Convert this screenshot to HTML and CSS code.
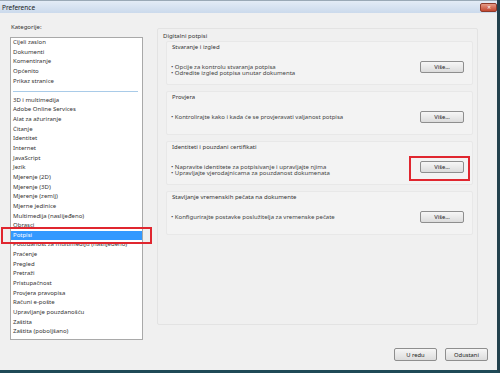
FILE: index.html
```html
<!DOCTYPE html>
<html>
<head>
    <title>Preference</title>
    <link rel="stylesheet" href="styles.css">
</head>
<body>
<div class="window">
    <div class="titlebar">
        <span class="title">Preference</span>
        <span class="close">&#x2715;</span>
    </div>

    <div class="main">
        <!-- category list on the left -->
        <div class="categories">
            <div class="label">Kategorije:</div>
            <ul class="list">
                <li>Cijeli zaslon</li>
                <li>Dokumenti</li>
                <li>Komentiranje</li>
                <li>Općenito</li>
                <li>Prikaz stranice</li>
                <li class="separator"></li>
                <li>3D i multimedija</li>
                <li>Adobe Online Services</li>
                <li>Alat za ažuriranje</li>
                <li>Čitanje</li>
                <li>Identitet</li>
                <li>Internet</li>
                <li>JavaScript</li>
                <li>Jezik</li>
                <li>Mjerenje (2D)</li>
                <li>Mjerenje (3D)</li>
                <li>Mjerenje (zemlj)</li>
                <li>Mjerne jedinice</li>
                <li>Multimedija (naslijeđeno)</li>
                <li>Obrasci</li>
                <li class="selected marked">Potpisi</li>
                <li>Pouzdanost za multimediju (naslijeđeno)</li>
                <li>Praćenje</li>
                <li>Pregled</li>
                <li>Pretraži</li>
                <li>Pristupačnost</li>
                <li>Provjera pravopisa</li>
                <li>Računi e-pošte</li>
                <li>Upravljanje pouzdanošću</li>
                <li>Zaštita</li>
                <li>Zaštita (poboljšano)</li>
            </ul>
        </div>

        <!-- settings for the selected category -->
        <div class="group">
            <div class="group-title">Digitalni potpisi</div>

            <div class="section">
                <div class="section-title">Stvaranje i izgled</div>
                <div class="section-body">
                    <ul class="bullets">
                        <li>• Opcije za kontrolu stvaranja potpisa</li>
                        <li>• Odredite izgled potpisa unutar dokumenta</li>
                    </ul>
                    <button class="btn">Više...</button>
                </div>
            </div>

            <div class="section">
                <div class="section-title">Provjera</div>
                <div class="section-body">
                    <ul class="bullets">
                        <li>• Kontrolirajte kako i kada će se provjeravati valjanost potpisa</li>
                    </ul>
                    <button class="btn">Više...</button>
                </div>
            </div>

            <div class="section">
                <div class="section-title">Identiteti i pouzdani certifikati</div>
                <div class="section-body">
                    <ul class="bullets">
                        <li>• Napravite identitete za potpisivanje i upravljajte njima</li>
                        <li>• Upravljajte vjerodajnicama za pouzdanost dokumenata</li>
                    </ul>
                    <span class="btn-wrap marked-btn"><button class="btn">Više...</button></span>
                </div>
            </div>

            <div class="section">
                <div class="section-title">Stavljanje vremenskih pečata na dokumente</div>
                <div class="section-body">
                    <ul class="bullets">
                        <li>• Konfigurirajte postavke poslužitelja za vremenske pečate</li>
                    </ul>
                    <button class="btn">Više...</button>
                </div>
            </div>
        </div>
    </div>

    <div class="footer">
        <button class="btn">U redu</button>
        <button class="btn">Odustani</button>
    </div>
</div>
</body>
</html>
```

FILE: styles.css
```css
body {
    margin: 0;
    font-family: "Noto Sans", "Open Sans", sans-serif;
    color: #333;
}

.window {
    width: 500px;
    height: 373px;
    box-sizing: border-box;
    background-color: #f0f0f0;
    border-right: 3px solid #22414d;
    border-bottom: 3px solid #1f4a57;
    display: flex;
    flex-direction: column;
}

/* Title bar */
.titlebar {
    height: 13px;
    box-sizing: border-box;
    border-top: 1px solid #9aa9b6;
    background: linear-gradient(#e3ecf6, #cbdaec);
    display: flex;
    align-items: center;
    justify-content: space-between;
    padding-left: 2px;
}

.title {
    font-size: 6.5px;
    color: #1b1b1b;
}

.close {
    width: 17px;
    height: 9px;
    margin-top: 1px;
    border-radius: 2px;
    background: linear-gradient(#e59a85, #c4472f);
    border: 1px solid #8e3a2a;
    box-sizing: border-box;
    color: #fff;
    font-size: 5px;
    line-height: 7px;
    text-align: center;
}

/* Main area */
.main {
    display: flex;
    padding: 10px 0 0 10px;
}

.categories {
    width: 133px;
}

.label {
    font-size: 6px;
    line-height: 8px;
    padding-left: 1px;
}

.list {
    list-style: none;
    margin: 6px 0 0 0;
    padding: 0;
    height: 303px;
    box-sizing: border-box;
    background-color: #fff;
    border: 1px solid #a9a9a9;
    font-size: 6px;
}

.list li {
    height: 9.65px;
    line-height: 9.65px;
    padding-left: 2px;
    white-space: nowrap;
    color: #333;
    position: relative;
}

.list li.separator {
    display: flex;
    align-items: center;
    padding: 0 4px 0 2px;
}

.list li.separator::before {
    content: "";
    flex: 1;
    height: 1px;
    background-color: #a9cbe8;
}

.list li.selected {
    background-color: #3399ff;
    color: #fff;
}

/* red annotation frames */
.marked::after,
.marked-btn::after {
    content: "";
    position: absolute;
    border: 2px solid #e0262f;
    z-index: 2;
}

.marked::after {
    left: -10px;
    right: -10px;
    top: -4px;
    bottom: -4px;
}

/* Right group */
.group {
    margin: 5px 0 0 14px;
    width: 321px;
    height: 297px;
    box-sizing: border-box;
    border: 1px solid #e3e3e3;
    border-radius: 2px;
    padding: 3px 4px 0 5px;
}

.group-title {
    font-size: 6px;
    line-height: 8px;
    color: #333;
}

.section {
    margin: 1px 0 6px 3px;
    height: 44px;
    box-sizing: border-box;
    border: 1px solid #e8e8e8;
    border-radius: 2px;
    background-color: #f3f3f3;
    padding: 1px 8px 0 4px;
}

.section-title {
    font-size: 6px;
    line-height: 8px;
    color: #333;
    padding-left: 1px;
}

.section-body {
    display: flex;
    justify-content: space-between;
    align-items: flex-start;
    margin-top: 9.7px;
}

.bullets {
    list-style: none;
    margin: 0;
    padding: 3px 0 0 0;
    font-size: 6px;
    line-height: 6.5px;
    color: #444;
    white-space: nowrap;
}

.btn {
    width: 44px;
    height: 12.5px;
    padding: 0;
    font-family: "Noto Sans", "Open Sans", sans-serif;
    font-size: 5.8px;
    color: #222;
    background: linear-gradient(#f6f6f6, #dcdcdc);
    border: 1px solid #8e8e8e;
    border-radius: 2px;
}

.btn-wrap {
    position: relative;
    display: flex;
}

.marked-btn::after {
    left: -11px;
    right: -6px;
    top: -5px;
    bottom: -8px;
}

/* Footer buttons */
.footer {
    display: flex;
    justify-content: flex-end;
    gap: 8px;
    margin-top: 8px;
    padding-right: 9px;
}

.footer .btn {
    width: 43px;
    height: 13px;
}
```
